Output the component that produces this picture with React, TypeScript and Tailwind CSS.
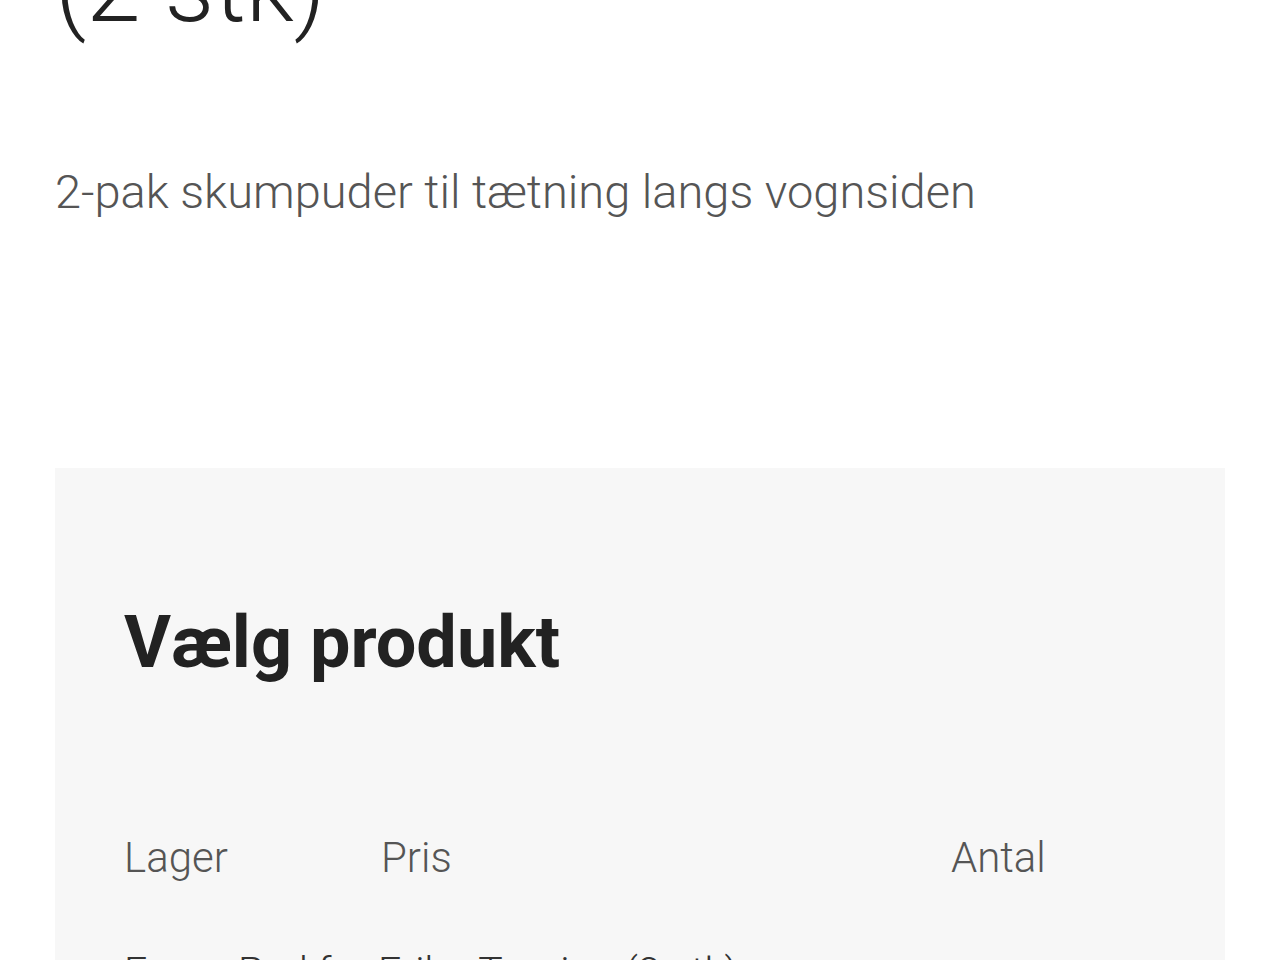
import React from "react";

const font = { fontFamily: "Roboto, 'Noto Sans', sans-serif" };

export default function App() {
  return (
    <div className="min-h-[960px] bg-white text-[#222]" style={font}>
      <div className="px-[55px]">
        <div className="h-[46px] overflow-hidden flex items-end">
          <h1 className="text-[98px] font-light leading-[116px] whitespace-nowrap text-[#222]">
            (2 stk)
          </h1>
        </div>
        <p className="mt-[118px] text-[47px] font-light leading-[56px] text-[#555]">
          2-pak skumpuder til tætning langs vognsiden
        </p>
      </div>
      <div className="mx-[55px] mt-[248px] bg-[#f7f7f7] px-[69px] pt-[135px] pb-10">
        <h2 className="text-[72px] font-bold leading-[80px] text-[#222]">Vælg produkt</h2>
        <div className="mt-[147px] grid grid-cols-[257px_570px_1fr] text-[42px] font-light leading-[56px] text-[#555]">
          <div>Lager</div>
          <div>Pris</div>
          <div>Antal</div>
        </div>
        <div className="mt-[58px] text-[41px] font-light leading-[56px] text-[#333]">
          Foam Pad for Eriba Touring (2 stk)
        </div>
      </div>
    </div>
  );
}
